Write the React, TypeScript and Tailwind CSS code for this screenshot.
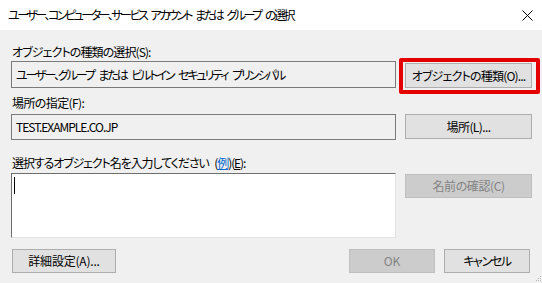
import React from "react";

const font = "font-['Noto_Sans_CJK_JP','Noto_Sans',sans-serif] [font-feature-settings:'palt']";

function Btn({ children, disabled, className = "" }: { children: React.ReactNode; disabled?: boolean; className?: string }) {
  return (
    <div
      className={
        "flex items-center justify-center border text-[12px] whitespace-nowrap " +
        (disabled ? "bg-[#cccccc] border-[#bfbfbf] text-[#838383] " : "bg-[#e1e1e1] border-[#adadad] text-black ") +
        className
      }
    >
      {children}
    </div>
  );
}

export default function App() {
  return (
    <div className={"w-[542px] h-[283px] overflow-hidden relative text-black " + font}>
      <div className="h-[30px] bg-white flex items-center justify-between pl-[8px] pr-[9px]">
        <span className="text-[12px] leading-none tracking-[-2.5px] [word-spacing:4px] whitespace-nowrap">ユーザー、コンピューター、サービス アカウント または グループ の選択</span>
        <svg width="11" height="11" viewBox="0 0 11 11" className="block">
          <path d="M0.5 0.5 L10.5 10.5 M10.5 0.5 L0.5 10.5" stroke="#000" strokeWidth="1" />
        </svg>
      </div>
      <div className="h-[253px] bg-[#f0f0f0] pl-[11px] flex flex-col relative">
        <div className="mt-[14px] h-[16px] leading-[16px] text-[12px] pl-[1px] tracking-[-0.9px]">オブジェクトの種類の選択(S):</div>
        <div className="mt-[1px] flex gap-[9px] items-start">
          <div className="w-[385px] h-[27px] border border-[#7a7a7a] flex items-center pl-[4px] text-[12px] tracking-[-2.1px] [word-spacing:4px] whitespace-nowrap">
            ユーザー、グループ または ビルトイン セキュリティ プリンシパル
          </div>
          <div className="relative mt-[2px]">
            <Btn className="w-[127px] h-[25px] tracking-[-0.8px]">オブジェクトの種類(O)...</Btn>
            <div className="absolute left-[-6px] top-[-5px] w-[141px] h-[36px] border-[4px] border-[#e50000] rounded-[2px]" />
          </div>
        </div>
        <div className="mt-[7px] h-[16px] leading-[16px] text-[12px] pl-[1px] tracking-[-0.6px]">場所の指定(F):</div>
        <div className="mt-[3px] flex gap-[9px] items-start">
          <div className="w-[385px] h-[26px] border border-[#7a7a7a] flex items-center pl-[4px] text-[12px] tracking-[-1px]">
            TEST.EXAMPLE.CO.JP
          </div>
          <Btn className="w-[127px] h-[25px] tracking-[-0.6px]">場所(L)...</Btn>
        </div>
        <div className="mt-[15px] h-[16px] leading-[16px] text-[12px] pl-[1px] tracking-[-1.1px] [word-spacing:4px] whitespace-nowrap">
          選択するオブジェクト名を入力してください (<span className="text-[#0066cc] underline">例</span>)(<span className="underline">E</span>):
        </div>
        <div className="mt-[2px] flex gap-[9px] items-start">
          <div className="w-[385px] h-[65px] bg-white border border-t-[#6e6e6e] border-l-[#6e6e6e] border-r-[#e3e3e3] border-b-[#e3e3e3] pl-[2px] pt-[3px]">
            <div className="w-[1px] h-[17px] bg-black" />
          </div>
          <Btn disabled className="w-[127px] h-[24px] mt-[1px] tracking-[-0.4px]">名前の確認(C)</Btn>
        </div>
        <div className="mt-[11px] flex items-start pr-[12px]">
          <Btn className="ml-[1px] w-[104px] h-[24px] tracking-[-0.2px]">詳細設定(A)...</Btn>
          <div className="flex-1" />
          <Btn disabled className="w-[86px] h-[24px]">OK</Btn>
          <Btn className="ml-[9px] w-[86px] h-[24px] tracking-[-1.4px]">キャンセル</Btn>
        </div>
        <svg width="5" height="5" viewBox="0 0 5 5" className="absolute right-[1px] bottom-[2px]">
          <rect x="4" y="0" width="1" height="1" fill="#b8b8b8" />
          <rect x="2" y="2" width="1" height="1" fill="#b8b8b8" />
          <rect x="4" y="2" width="1" height="1" fill="#b8b8b8" />
          <rect x="0" y="4" width="1" height="1" fill="#b8b8b8" />
          <rect x="2" y="4" width="1" height="1" fill="#b8b8b8" />
          <rect x="4" y="4" width="1" height="1" fill="#b8b8b8" />
        </svg>
      </div>
    </div>
  );
}
